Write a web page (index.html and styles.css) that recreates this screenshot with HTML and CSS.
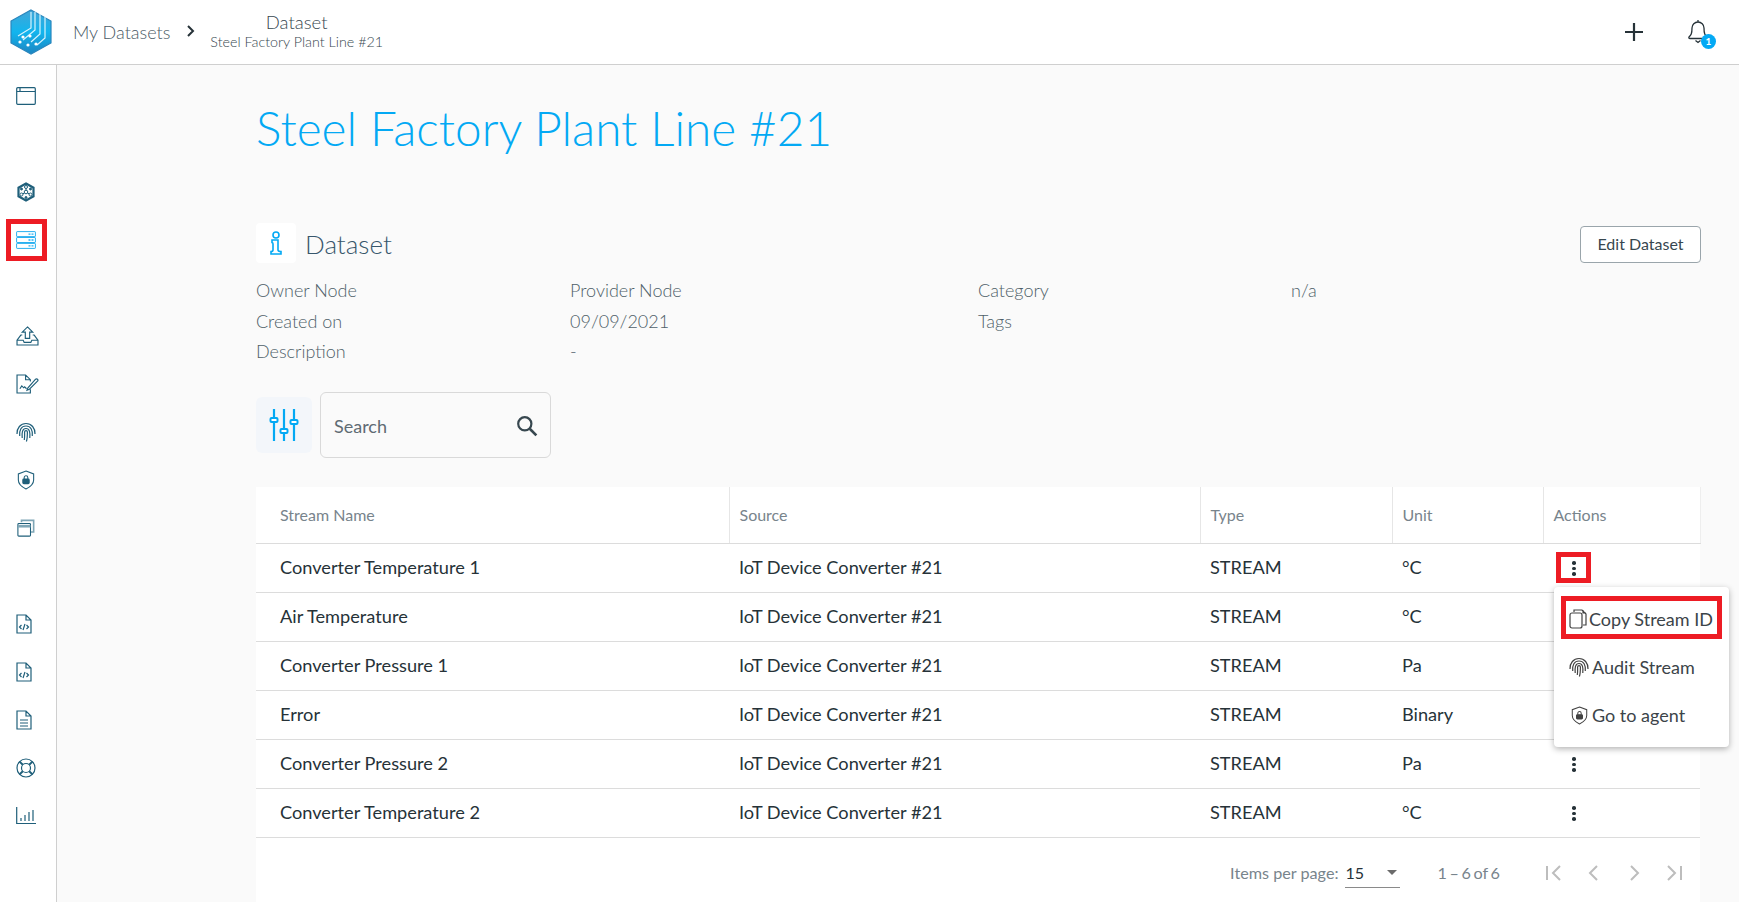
FILE: index.html
```html
<!DOCTYPE html>
<html lang="en">
<head>
<meta charset="utf-8">
<title>Steel Factory Plant Line #21</title>
<link rel="stylesheet" href="styles.css">
</head>
<body>
<svg class="defs" width="0" height="0" aria-hidden="true">
  <defs>
    <linearGradient id="logoGrad" x1="0" y1="0" x2="0" y2="1">
      <stop offset="0" stop-color="#43a5d6"/>
      <stop offset="0.5" stop-color="#12b5ee"/>
      <stop offset="1" stop-color="#1c86c2"/>
    </linearGradient>
  </defs>
</svg>
<header class="topbar">
  <svg class="logo" viewBox="0 0 42 46" width="42" height="46">
    <path d="M21 1 L41 12 V34 L21 45 L1 34 V12 Z" fill="url(#logoGrad)"/>
    <path d="M21 1 L41 12 V34 L21 45 L1 34 V12 Z" fill="none" stroke="#2a86bd" stroke-width="1.200"/>
    <path d="M21 3V19L8 27M25 3V21L13 31M30 5V25L21 33M35 8V29L27 36" fill="none" stroke="#d6f3fd" stroke-width="1.200"/>
    <circle cx="13" cy="28" r="1.600" fill="#fff"/><circle cx="20" cy="27" r="1.600" fill="#fff"/><circle cx="10" cy="33" r="1.600" fill="#fff"/><circle cx="18" cy="36" r="1.600" fill="#fff"/><circle cx="26" cy="35" r="1.600" fill="#fff"/>
  </svg>
  <a class="crumb">My Datasets</a>
  <svg class="crumb-sep" viewBox="0 0 10 14" width="10" height="14"><path d="M2 2l5 5-5 5" fill="none" stroke="#263238" stroke-width="2"/></svg>
  <div class="crumb-current">
    <div class="crumb-title">Dataset</div>
    <div class="crumb-sub">Steel Factory Plant Line #21</div>
  </div>
  <div class="top-actions">
    <svg class="plus" viewBox="0 0 20 20" width="20" height="20"><path d="M10 1v18M1 10h18" stroke="#263238" stroke-width="2.200"/></svg>
    <div class="bell">
      <svg viewBox="0 0 24 26" width="24" height="26"><path d="M3 19c2-2 3-3 3-9a6 6 0 0 1 12 0c0 6 1 7 3 9 .5 1 0 1.500-1 1.500H4c-1 0-1.500-.5-1-1.500zM9.500 22.500l2.500 2 2.500-2M12 4V2" fill="none" stroke="#263238" stroke-width="1.300"/></svg>
      <span class="badge">1</span>
    </div>
  </div>
</header>
<div class="shell">
  <nav class="sidebar">
    <div class="nav-item"><svg class="ico i-window" viewBox="0 0 20 18"><rect x="0.700" y="0.700" width="18.600" height="16.600" rx="1" /><path d="M1 4.500h18M4 1v3.500"/></svg></div>
    <div class="nav-gap"></div>
    <div class="nav-item"><svg class="ico i-cube" viewBox="0 0 20 20"><path d="M10 1.500l7.500 4.200v8.600L10 18.500l-7.500-4.200V5.700z" stroke-width="2.200"/><circle cx="10" cy="10" r="1.800"/><circle cx="10" cy="5" r="1.500"/><circle cx="5.500" cy="12.500" r="1.500"/><circle cx="14.500" cy="12.500" r="1.500"/><path d="M10 6.500v2M8.500 11l-2 1M11.500 11l2 1"/><circle cx="5.500" cy="7" r="1" fill="#1f5f7a"/><circle cx="14.500" cy="7" r="1" fill="#1f5f7a"/><circle cx="10" cy="15.500" r="1" fill="#1f5f7a"/></svg></div>
    <div class="nav-item nav-active"><svg class="ico i-window ico-blue" viewBox="0 0 20 18"><rect x="0.600" y="0.600" width="18.800" height="5" rx="0.500"/><rect x="0.600" y="6.500" width="18.800" height="5" rx="0.500"/><rect x="0.600" y="12.400" width="18.800" height="5" rx="0.500"/><path d="M12.500 3.100h2M15.500 3.100h2M12.500 9h2M15.500 9h2M12.500 14.900h2M15.500 14.900h2" stroke-width="1.300"/></svg></div>
    <div class="nav-gap"></div>
    <div class="nav-item"><svg class="ico i-wide" viewBox="0 0 24 21"><path d="M12 1l5.500 5.500h-3.200V13H9.700V6.500H6.500zM6.500 9.500H5L1 15v5h22v-5l-4-5.500h-1.500M1 15h6.500l1 2.200h7l1-2.200H23"/></svg></div>
    <div class="nav-item"><svg class="ico i-wide" viewBox="0 0 24 21"><path d="M15 8V6l-5-5H1v19h14v-4M10 1v5h5M4 15.500l2-3 2 2 1-1 2 2"/><path d="M12.500 14.500l-1 2.500 2.500-1 8.500-8.500a1.300 1.300 0 0 0-2-2z"/></svg></div>
    <div class="nav-item"><svg class="ico i-print" viewBox="0 0 20 20"><path d="M1 12C.8 6 4.500 1.500 10 1.500S19.200 6 19 12M3.700 14c-.5-6 1.500-10 6.300-10s6.800 4 6.300 10M6.200 16c-.5-5 0-9.500 3.800-9.500s4.300 4.500 3.800 9.500M8.300 18c.5-3 .3-5.500.3-8 0-1.800 2.800-1.800 2.800 0 0 3.500 0 6.500-1 9.500"/></svg></div>
    <div class="nav-item"><svg class="ico i-shield" viewBox="0 0 20 22"><path d="M10 1l8.500 3.200V11c0 5-4.500 8-8.500 10-4-2-8.500-5-8.500-10V4.200z"/><rect x="6.500" y="10" width="7" height="5" rx="1" fill="#1f5f7a"/><path d="M8 10V8.300a2 2 0 0 1 4 0V10"/></svg></div>
    <div class="nav-item"><svg class="ico i-shield" viewBox="0 0 20 20"><path d="M5 3.500V1.500h13.500v13H15.500" stroke="#7fa6b6" stroke-width="1.800"/><rect x="1" y="5" width="14" height="14" rx="1"/><path d="M1 8h14" stroke-width="3" stroke="#7fa6b6"/></svg></div>
    <div class="nav-gap"></div>
    <div class="nav-item"><svg class="ico i-doc" viewBox="0 0 16 20"><path d="M1 1h9l5 5v13H1zM10 1v5h5"/><path d="M5.500 11l-2 2 2 2M10.500 11l2 2-2 2M9 10l-2 6"/></svg></div>
    <div class="nav-item"><svg class="ico i-doc" viewBox="0 0 16 20"><path d="M1 1h9l5 5v13H1zM10 1v5h5"/><path d="M5.500 11l-2 2 2 2M10.500 11l2 2-2 2M9 10l-2 6"/></svg></div>
    <div class="nav-item"><svg class="ico i-doc" viewBox="0 0 16 20"><path d="M1 1h9l5 5v13H1zM10 1v5h5M4 10h8M4 13h8M4 16h8"/></svg></div>
    <div class="nav-item"><svg class="ico i-print" viewBox="0 0 20 20"><circle cx="10" cy="10" r="9"/><circle cx="10" cy="10" r="4.500"/><path d="M3.600 3.600l3.200 3.200M16.400 3.600l-3.200 3.200M3.600 16.400l3.200-3.200M16.400 16.400l-3.200-3.200" stroke-width="2"/></svg></div>
    <div class="nav-item"><svg class="ico i-print" viewBox="0 0 20 18"><path d="M.7 0v16.500H20M5 14v-3M9 14V8M13 14V5M17 14V3"/></svg></div>
  </nav>
  <main class="content">
    <h1 class="page-title">Steel Factory Plant Line #21</h1>
    <section class="dataset-head">
      <div class="section-title">
        <span class="info-tile"><svg viewBox="0 0 14 24" width="14" height="24"><circle cx="7" cy="4" r="3" fill="none" stroke="#03a9f4" stroke-width="1.600"/><path d="M3 9h6v10c0 1 1 1.500 3 1.500v2.500H2v-2.500c1 0 2-.5 2-1.500v-6c0-1-.5-1.500-1-1.500z" fill="none" stroke="#03a9f4" stroke-width="1.600"/></svg></span>
        <span class="section-name">Dataset</span>
      </div>
      <button class="edit-btn">Edit Dataset</button>
    </section>
    <div class="meta">
      <span>Owner Node</span><span>Provider Node</span><span>Category</span><span>n/a</span>
      <span>Created on</span><span>09/09/2021</span><span>Tags</span><span></span>
      <span>Description</span><span>-</span><span></span><span></span>
    </div>
    <div class="toolbar">
      <span class="filter-tile"><svg viewBox="0 0 30 34" width="30" height="34"><path d="M5 1v32M15 1v32M25 1v32" stroke="#03a9f4" stroke-width="2.200"/><rect x="1.500" y="10" width="7" height="4" rx="1" fill="#fff" stroke="#03a9f4" stroke-width="2"/><rect x="11.500" y="21" width="7" height="4" rx="1" fill="#fff" stroke="#03a9f4" stroke-width="2"/><rect x="21.500" y="12" width="7" height="4" rx="1" fill="#fff" stroke="#03a9f4" stroke-width="2"/></svg></span>
      <div class="search">
        <span>Search</span>
        <svg viewBox="0 0 20 20" width="22" height="22"><circle cx="8" cy="8" r="6" fill="none" stroke="#37474f" stroke-width="2"/><path d="M12.500 12.500l6 6" stroke="#37474f" stroke-width="2.400"/></svg>
      </div>
    </div>
    <section class="table-card">
      <table class="streams">
        <colgroup><col class="c1"><col class="c2"><col class="c3"><col class="c4"><col class="c5"></colgroup>
        <thead><tr><th>Stream Name</th><th>Source</th><th>Type</th><th>Unit</th><th>Actions</th></tr></thead>
        <tbody>
          <tr><td>Converter Temperature 1</td><td>IoT Device Converter #21</td><td>STREAM</td><td>°C</td><td><span class="dots"><i></i><i></i><i></i></span></td></tr>
          <tr><td>Air Temperature</td><td>IoT Device Converter #21</td><td>STREAM</td><td>°C</td><td><span class="dots"><i></i><i></i><i></i></span></td></tr>
          <tr><td>Converter Pressure 1</td><td>IoT Device Converter #21</td><td>STREAM</td><td>Pa</td><td><span class="dots"><i></i><i></i><i></i></span></td></tr>
          <tr><td>Error</td><td>IoT Device Converter #21</td><td>STREAM</td><td>Binary</td><td><span class="dots"><i></i><i></i><i></i></span></td></tr>
          <tr><td>Converter Pressure 2</td><td>IoT Device Converter #21</td><td>STREAM</td><td>Pa</td><td><span class="dots"><i></i><i></i><i></i></span></td></tr>
          <tr><td>Converter Temperature 2</td><td>IoT Device Converter #21</td><td>STREAM</td><td>°C</td><td><span class="dots"><i></i><i></i><i></i></span></td></tr>
        </tbody>
      </table>
      <div class="paginator">
        <span class="pg-label">Items per page:</span>
        <span class="pg-select"><span class="pg-value">15</span><span class="caret"></span></span>
        <span class="pg-range">1 – 6 of 6</span>
        <span class="pg-nav">
          <svg viewBox="0 0 18 18" width="18" height="18"><path d="M2 2v14M15 2L8 9l7 7"/></svg>
          <svg viewBox="0 0 18 18" width="18" height="18"><path d="M12 2L5 9l7 7"/></svg>
          <svg viewBox="0 0 18 18" width="18" height="18"><path d="M6 2l7 7-7 7"/></svg>
          <svg viewBox="0 0 18 18" width="18" height="18"><path d="M16 2v14M3 2l7 7-7 7"/></svg>
        </span>
      </div>
    </section>
  </main>
</div>
<div class="mark mark-nav"></div>
<div class="mark mark-dots"></div>
<div class="menu">
  <div class="menu-item menu-copy"><svg viewBox="0 0 18 20" width="18" height="20"><path d="M5 3V1h8l4 4v11h-3M14 1v3h3"/><rect x="1" y="4" width="12" height="15" rx="2"/></svg>Copy Stream ID</div>
  <div class="menu-item"><svg viewBox="0 0 20 20" width="20" height="20"><path d="M1 12C.8 6 4.500 1.500 10 1.500S19.200 6 19 12M3.700 14c-.5-6 1.500-10 6.300-10s6.800 4 6.300 10M6.200 16c-.5-5 0-9.500 3.800-9.500s4.300 4.500 3.800 9.500M8.300 18c.5-3 .3-5.500.3-8 0-1.800 2.800-1.800 2.800 0 0 3.500 0 6.500-1 9.500"/></svg>Audit Stream</div>
  <div class="menu-item menu-agent"><svg viewBox="0 0 20 22" width="17" height="19"><path d="M10 1l8.500 3.200V11c0 5-4.500 8-8.500 10-4-2-8.500-5-8.500-10V4.200z"/><rect x="6.500" y="10" width="7" height="5" rx="1" fill="#424242"/><path d="M8 10V8.300a2 2 0 0 1 4 0V10"/></svg>Go to agent</div>
  <div class="mark-copy"></div>
</div>
</body>
</html>
```
FILE: styles.css
```css
* { box-sizing: border-box; }
html, body { margin: 0; height: 100%; overflow: hidden; }
body { font-family: Lato, "Liberation Sans", sans-serif; background: #fafafa; color: #263238; position: relative; }
.defs { position: absolute; }

.topbar { height: 65px; background: #fff; border-bottom: 1px solid #cfcfcf; display: flex; align-items: center; padding-left: 10px; }
.logo { flex: none; margin-top: -1px; }
.crumb { margin-left: 21px; font-size: 18px; color: #4a5a66; font-weight: 300; }
.crumb-sep { margin-left: 16px; margin-top: -2px; }
.crumb-current { margin-left: 14px; text-align: center; color: #37474f; font-weight: 300; }
.crumb-title { font-size: 18.500px; line-height: 20px; margin-top: -2px; }
.crumb-sub { font-size: 14.300px; line-height: 18px; margin-top: 1px; }
.top-actions { margin-left: auto; display: flex; align-items: center; gap: 42px; padding-right: 29px; }
.bell { position: relative; width: 24px; height: 28px; }
.badge { position: absolute; right: -6px; bottom: -3px; width: 15px; height: 15px; border-radius: 50%; background: #03a9f4; color: #fff; font-size: 10px; font-weight: 700; line-height: 15px; text-align: center; }

.shell { display: flex; height: 837px; }
.sidebar { width: 57px; flex: none; background: #fff; border-right: 1px solid #cfcfcf; padding-top: 7px; }
.nav-item { height: 48px; display: flex; align-items: center; padding-left: 16px; }
.nav-gap { height: 48px; }
.ico { fill: none; stroke: #1f5f7a; stroke-width: 1.200; }
.i-window { width: 20px; height: 18px; }
.i-cube { width: 20px; height: 20px; stroke-width: 1; }
.i-wide { width: 23px; height: 20px; }
.i-print { width: 20px; height: 20px; }
.i-shield { width: 18px; height: 20px; margin-left: 1px; }
.i-doc { width: 16px; height: 20px; }
.ico-blue { stroke: #29b0f0; stroke-width: 1; }

.content { flex: 1; padding: 34px 39px 0 199px; min-width: 0; display: flex; flex-direction: column; overflow: hidden; }
.page-title { margin: 0; font-size: 47.700px; line-height: 58px; font-weight: 300; color: #03a9f4; height: 124px; flex: none; }
.dataset-head { display: flex; justify-content: space-between; align-items: center; height: 40px; flex: none; }
.section-title { display: flex; align-items: center; gap: 9px; }
.info-tile { width: 40px; height: 40px; border-radius: 4px; background: #fff; display: flex; align-items: center; justify-content: center; }
.section-name { font-size: 26px; font-weight: 300; color: #37566b; margin-top: 1px; }
.edit-btn { font: 400 16px Lato, sans-serif; color: #37474f; background: #fff; border: 1px solid #9aa5ab; border-radius: 4px; width: 121px; height: 37px; padding: 0 0 2px; margin-top: 2px; margin-right: -1px; }

.meta { display: grid; grid-template-columns: 314px 408px 313px 1fr; grid-auto-rows: 30.500px; margin-top: 12px; font-size: 18px; font-weight: 300; color: #4f5f69; align-items: center; flex: none; }

.toolbar { display: flex; align-items: center; gap: 8px; margin-top: 25px; flex: none; }
.filter-tile { width: 56px; height: 56px; border-radius: 6px; background: #f3f6fa; display: flex; align-items: center; justify-content: center; }
.search { width: 231px; height: 66px; border: 1px solid #d9d9d9; border-radius: 6px; display: flex; align-items: center; justify-content: space-between; padding: 3px 12px 0 13px; font-size: 18px; color: #5f6b73; }

.table-card { margin-top: 29px; background: #fff; flex: 1; }
.streams { width: 100%; border-collapse: collapse; table-layout: fixed; }
.c1 { width: 473px; } .c2 { width: 471px; } .c3 { width: 192px; } .c4 { width: 151px; } .c5 { width: 157px; }
.streams th { height: 57px; font-size: 16px; font-weight: 400; color: #78848c; text-align: left; padding: 0 10px 1px; border-bottom: 1px solid #dcdcdc; border-left: 1px solid #e6e6e6; }
.streams th:first-child, .streams td:first-child { padding-left: 24px; border-left: 0; }
.streams th:last-child { border-right: 1px solid #eeeeee; }
.streams td { height: 49px; font-size: 18.200px; color: #263238; padding: 0 10px 3px; border-bottom: 1px solid #dcdcdc; }
.dots { display: flex; flex-direction: column; align-items: center; gap: 2px; width: 10px; margin-left: 16px; margin-top: 4px; }
.dots i { width: 3.500px; height: 3.500px; border-radius: 50%; background: #263238; }

.paginator { height: 64px; display: flex; align-items: center; justify-content: flex-end; padding: 5px 17px 0 0; font-size: 16.200px; color: #78848c; }
.pg-select { display: flex; align-items: center; justify-content: space-between; width: 55px; height: 31px; margin-left: 7px; border-bottom: 1px solid #8a8a8a; color: #263238; font-size: 16px; padding-right: 3px; padding-left: 0; }
.caret { width: 0; height: 0; border: 5px solid transparent; border-top-color: #6b6b6b; border-bottom: 0; }
.pg-range { margin-left: 37px; word-spacing: -1.500px; }
.pg-nav { display: flex; gap: 22px; margin-left: 45px; }
.pg-nav svg { fill: none; stroke: #bdbdbd; stroke-width: 2; }

.mark { position: absolute; border: 5px solid #ed1c24; pointer-events: none; }
.mark-nav { left: 6px; top: 219px; width: 41px; height: 42px; }
.mark-dots { left: 1556px; top: 552px; width: 35px; height: 31px; }
.menu { position: absolute; left: 1554px; top: 587px; width: 175px; height: 160px; background: #fff; border-radius: 4px; padding-top: 8px; box-shadow: 0 2px 6px rgba(0,0,0,.3); }
.menu-item { height: 48px; display: flex; align-items: center; gap: 3px; padding-left: 15px; font-size: 18px; color: #3c4449; }
.menu-item svg { fill: none; stroke: #424242; stroke-width: 1.200; flex: none; }
.menu-copy { gap: 2px; }
.menu-agent { gap: 4px; padding-left: 17px; }
.mark-copy { position: absolute; left: 7px; top: 9px; width: 161px; height: 43px; border: 5px solid #ed1c24; }
```
